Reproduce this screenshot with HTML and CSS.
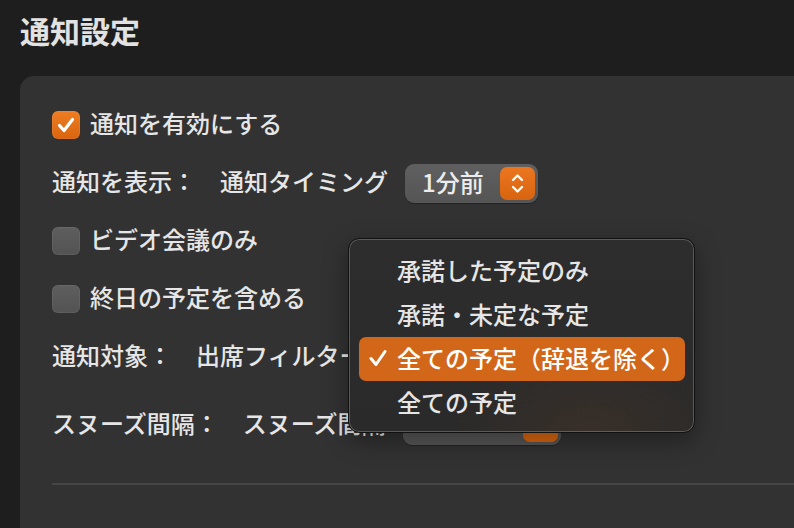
FILE: index.html
```html
<!DOCTYPE html>
<html lang="ja">
<head>
<meta charset="utf-8">
<title>通知設定</title>
<link rel="stylesheet" href="styles.css">
</head>
<body>
<h1 class="title">通知設定</h1>
<section class="card">
  <div class="rows">
    <label class="row">
      <span class="check on"><svg viewBox="0 0 28 28" width="28" height="28"><polyline points="7.5,14.5 12,19.5 20.5,8.5" fill="none" stroke="#fff" stroke-width="3.2" stroke-linecap="round" stroke-linejoin="round"/></svg></span>
      <span class="text">通知を有効にする</span>
    </label>
    <div class="row">
      <span class="label">通知を表示：</span>
      <span class="text">通知タイミング</span>
      <span class="popup w133"><span class="pv">1分前</span><span class="stepper"><svg viewBox="0 0 35 33" width="35" height="33"><polyline points="13,13 17.5,8.5 22,13" fill="none" stroke="#fff" stroke-width="2.4" stroke-linecap="round" stroke-linejoin="round"/><polyline points="13,20 17.5,24.5 22,20" fill="none" stroke="#fff" stroke-width="2.4" stroke-linecap="round" stroke-linejoin="round"/></svg></span></span>
    </div>
    <label class="row">
      <span class="check"></span>
      <span class="text">ビデオ会議のみ</span>
    </label>
    <label class="row">
      <span class="check"></span>
      <span class="text">終日の予定を含める</span>
    </label>
    <div class="row">
      <span class="label">通知対象：</span>
      <span class="text">出席フィルター</span>
      <span class="popup w280"><span class="stepper"></span></span>
    </div>
    <div class="row snooze">
      <span class="label">スヌーズ間隔：</span>
      <span class="text">スヌーズ間隔</span>
      <span class="popup w158"><span class="stepper"></span></span>
    </div>
  </div>
  <hr class="sep">

  <div class="menu">
    <div class="item">承諾した予定のみ</div>
    <div class="item">承諾・未定な予定</div>
    <div class="item sel"><svg class="tick" viewBox="0 0 18 18" width="18" height="18"><polyline points="2,9.5 7,15.5 16,2.5" fill="none" stroke="#fff" stroke-width="3" stroke-linecap="round" stroke-linejoin="round"/></svg>全ての予定（辞退を除く）</div>
    <div class="item">全ての予定</div>
  </div>
</section>
</body>
</html>
```
FILE: styles.css
```css
* { box-sizing: border-box; }
html, body { height: 100%; }
body {
  margin: 0;
  background: #1e1e1e;
  color: #e4e4e4;
  font-family: "Noto Sans CJK JP", "Noto Sans", sans-serif;
  overflow: hidden;
}
.title {
  margin: 0;
  padding: 12px 0 0 20px;
  height: 76px;
  font-size: 30px;
  font-weight: 700;
  line-height: 36px;
  color: #e2e2e2;
}
.card {
  position: relative;
  margin-left: 20px;
  height: 460px;
  background: #323232;
  border-top-left-radius: 14px;
  padding: 29px 0 0 32px;
}
.rows {
  display: flex;
  flex-direction: column;
  gap: 18px;
}
.row {
  display: flex;
  align-items: center;
  height: 40px;
  font-size: 24px;
  font-weight: 500;
  line-height: 1;
  white-space: nowrap;
}
.row.snooze { margin-top: 10px; }
.check {
  width: 28px;
  height: 28px;
  border-radius: 6px;
  background: linear-gradient(#5e5e5e, #535353);
  box-shadow: inset 0 0 0 1px rgba(255,255,255,0.06);
  margin-right: 10px;
  flex: none;
  display: flex;
}
.check.on {
  background: linear-gradient(#ee7d22, #d9650f);
}
.text, .label { color: #e6e6e6; margin-bottom: 4px; }
.label { margin-right: 24px; }
.popup {
  margin-left: 17px;
  height: 39px;
  border-radius: 9px;
  background: linear-gradient(#5f5f5f, #555555);
  box-shadow: 0 1px 1px rgba(0,0,0,0.3);
  display: flex;
  align-items: center;
  justify-content: space-between;
  padding: 0 3px 0 17px;
  flex: none;
}
.popup .stepper:only-child { margin-left: auto; }
.w133 { width: 133px; }
.w158 { width: 158px; }
.w280 { width: 280px; }
.pv { color: #ececec; font-size: 24px; margin-bottom: 3px; }
.stepper {
  width: 35px;
  height: 33px;
  border-radius: 7px;
  background: linear-gradient(#ec7620, #d8640f);
  display: flex;
}
.sep {
  margin: 38px 0 0 0;
  border: 0;
  height: 2px;
  background: #464646;
}
.menu {
  position: absolute;
  left: 328px;
  top: 162px;
  width: 347px;
  height: 195px;
  padding: 10px 9px 9px 10px;
  border-radius: 11px;
  background:
    radial-gradient(ellipse 140px 80px at 70% 100%, rgba(120,70,30,0.18), transparent),
    linear-gradient(#2d2d2d, #2a2a2a);
  border: 1px solid #111;
  box-shadow: inset 0 0 0 1px rgba(255,255,255,0.22), 0 8px 24px rgba(0,0,0,0.35);
}
.item {
  height: 44px;
  display: flex;
  align-items: center;
  padding: 0 0 4px 38px;
  font-size: 24px;
  font-weight: 500;
  color: #e6e6e6;
  border-radius: 7px;
  white-space: nowrap;
  position: relative;
}
.item.sel {
  background: #d2671a;
  color: #fff;
}
.tick {
  position: absolute;
  left: 10px;
  top: 12px;
}
```
